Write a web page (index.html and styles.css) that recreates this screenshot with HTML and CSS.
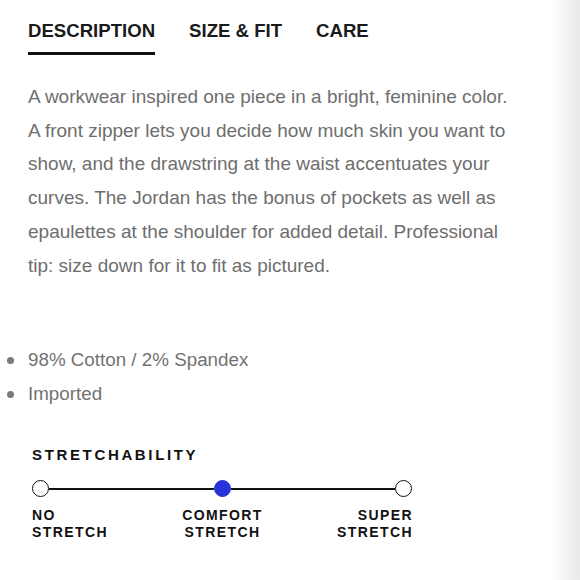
FILE: index.html
```html
<!DOCTYPE html>
<html>
<head>
<meta charset="utf-8">
<link rel="stylesheet" href="styles.css">
</head>
<body>
<div class="page">
  <nav class="tabs">
    <span class="tab active">DESCRIPTION</span>
    <span class="tab">SIZE &amp; FIT</span>
    <span class="tab">CARE</span>
  </nav>
  <p class="desc">A workwear inspired one piece in a bright, feminine color.<br>A front zipper lets you decide how much skin you want to<br>show, and the drawstring at the waist accentuates your<br>curves. The Jordan has the bonus of pockets as well as<br>epaulettes at the shoulder for added detail. Professional<br>tip: size down for it to fit as pictured.</p>
  <ul class="features">
    <li>98% Cotton / 2% Spandex</li>
    <li>Imported</li>
  </ul>
  <section class="stretch">
    <h3 class="stretch-title">STRETCHABILITY</h3>
    <div class="track">
      <span class="dot"></span>
      <span class="line"></span>
      <span class="dot filled"></span>
      <span class="line"></span>
      <span class="dot"></span>
    </div>
    <div class="labels">
      <span class="label left">NO<br>STRETCH</span>
      <span class="label center">COMFORT<br>STRETCH</span>
      <span class="label right">SUPER<br>STRETCH</span>
    </div>
  </section>
</div>
</body>
</html>
```
FILE: styles.css
```css
html, body {
  margin: 0;
  padding: 0;
}
body {
  width: 580px;
  height: 580px;
  overflow: hidden;
  background: linear-gradient(to right, #ffffff 552px, #e9e9e9 580px);
  font-family: "Liberation Sans", Arial, sans-serif;
}
.page {
  padding-left: 28px;
}
.tabs {
  display: flex;
  gap: 34px;
  padding-top: 20px;
}
.tab {
  font-weight: bold;
  font-size: 18.6px;
  line-height: 22px;
  color: #1a1a1a;
  padding-bottom: 10px;
  border-bottom: 3px solid transparent;
}
.tab.active {
  border-bottom-color: #111;
}
.desc {
  margin: 25px 0 0;
  white-space: nowrap;
  font-size: 19px;
  line-height: 33.7px;
  color: #6e6e6e;
}
.features {
  list-style: none;
  margin: 61px 0 0;
  padding: 0;
}
.features li {
  position: relative;
  font-size: 18.8px;
  line-height: 33.5px;
  color: #727272;
}
.features li::before {
  content: "";
  position: absolute;
  left: -21px;
  top: 14px;
  width: 7px;
  height: 7px;
  border-radius: 50%;
  background: #7a7a7a;
}
.stretch {
  margin-top: 35px;
  padding-left: 4px;
  width: 380px;
}
.stretch-title {
  margin: 0;
  font-size: 15px;
  line-height: 20px;
  letter-spacing: 2.65px;
  font-weight: bold;
  color: #111;
}
.track {
  display: flex;
  align-items: center;
  margin-top: 15px;
  height: 17px;
}
.dot {
  box-sizing: border-box;
  width: 17px;
  height: 17px;
  border-radius: 50%;
  border: 1.6px solid #111;
  background: #fff;
  flex: none;
}
.dot.filled {
  background: #2733d9;
  border-color: #2733d9;
}
.line {
  flex: 1;
  height: 1.6px;
  background: #111;
}
.labels {
  display: flex;
  justify-content: space-between;
  margin-top: 10px;
}
.label {
  font-size: 14px;
  line-height: 17px;
  font-weight: bold;
  letter-spacing: 1.4px;
  color: #111;
}
.label.center {
  text-align: center;
}
.label.right {
  text-align: right;
  margin-right: -1px;
}
```
